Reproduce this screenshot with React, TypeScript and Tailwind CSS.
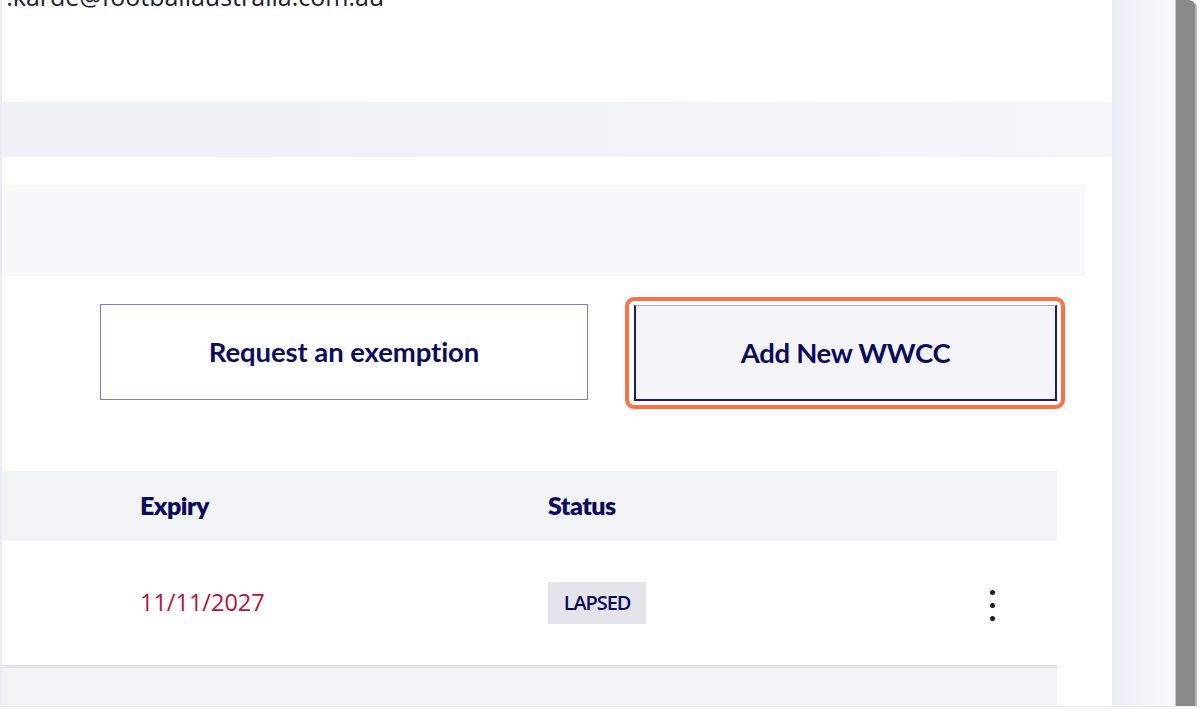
import React from 'react';

const lato = { fontFamily: 'Lato, "Open Sans", sans-serif' };

// --- TOP CARD (email tail, scrolled out of view) ---
const ContactCard: React.FC = () => (
    <div className="bg-white h-[102px] overflow-hidden">
        <p className="-mt-[20px] -ml-[6px] text-[25px] leading-[32px] text-[#1c1c2e] font-['Open_Sans',sans-serif]">
            r.karde@footballaustralia.com.au
        </p>
    </div>
);

// --- WWCC TABLE CARD ---
const WwccCard: React.FC = () => (
    <div className="bg-white flex-1 flex flex-col pt-[28px]">
        <div className="h-[91px] bg-[#f8f8fa] mr-[27px]"></div>

        <div className="flex justify-end gap-[46px] mr-[55px] mt-[28px]">
            <button
                className="w-[488px] h-[96px] bg-white border-[1.5px] border-[#7f7fc8] text-[#0b0b5e] text-[27.5px] font-bold tracking-[-0.1px]"
                style={lato}
            >
                Request an exemption
            </button>
            <button
                className="relative w-[423px] h-[96px] mt-[1px] bg-[#f4f4f9] border-2 border-[#1b1b78] border-t-[#a9a9d6] border-t-[1px] text-[#0b0b5e] text-[27.5px] font-bold tracking-[-0.3px]"
                style={lato}
            >
                Add New WWCC
                <span className="absolute -left-[11px] -top-[9px] -right-[10px] -bottom-[10px] border-[4px] border-[#ff7143] rounded-[9px] pointer-events-none"></span>
            </button>
        </div>

        <div className="mt-[70px] mr-[55px] flex-1 flex flex-col">
            <div className="h-[70px] bg-[#f2f3f5] grid grid-cols-[138px_408px_1fr] items-center text-[25px] font-extrabold text-[#0b0b5e]" style={lato}>
                <span></span>
                <span className="tracking-[-0.5px]">Expiry</span>
                <span className="tracking-[-0.5px]">Status</span>
            </div>
            <div className="h-[127px] grid grid-cols-[138px_408px_1fr_auto] items-center border-b-[3px] border-[#e3e3e9]">
                <span></span>
                <span className="text-[23.5px] text-[#b5123c] font-['Open_Sans',sans-serif]">11/11/2027</span>
                <span>
                    <span className="inline-flex items-center justify-center w-[98px] h-[42px] bg-[#e4e4ea] text-[20px] font-semibold text-[#0b0b5e] tracking-[-1.1px] font-['Open_Sans',sans-serif]">
                        LAPSED
                    </span>
                </span>
                <span className="flex flex-col items-center gap-[8px] pr-[62px] pt-[4px]">
                    <span className="w-[5px] h-[5px] rounded-full bg-[#1c1c2e]"></span>
                    <span className="w-[5px] h-[5px] rounded-full bg-[#1c1c2e]"></span>
                    <span className="w-[5px] h-[5px] rounded-full bg-[#1c1c2e]"></span>
                </span>
            </div>
            <div className="flex-1 bg-[#f2f3f5]"></div>
        </div>
    </div>
);

export default function App() {
    return (
        <div className="w-[1200px] h-[709px] bg-white overflow-hidden">
            <div className="w-[1197px] h-[707px] flex bg-[#f0f0f7] border-l-2 border-b-[1px] border-[#ecebf4] rounded-tr-[8px] overflow-hidden">
                <div className="w-[1110px] flex flex-col">
                    <ContactCard />
                    <div className="h-[55px] bg-gradient-to-r from-[#f0f0f7] via-[#f1f1f8] to-[#f5f5fa]"></div>
                    <WwccCard />
                </div>
                <div className="w-[63px] bg-gradient-to-r from-[#ebebf6] via-[#f4f4f9] to-[#f9f9fb]"></div>
                <div className="w-[22px] bg-[#f3f3f6] flex">
                    <div className="w-[1px] bg-[#c9c9cc]"></div>
                    <div className="flex-1 bg-[#8a8a8a] rounded-tr-[6px]"></div>
                    <div className="w-[2px] bg-[#b5b5b8]"></div>
                </div>
            </div>
        </div>
    );
}
